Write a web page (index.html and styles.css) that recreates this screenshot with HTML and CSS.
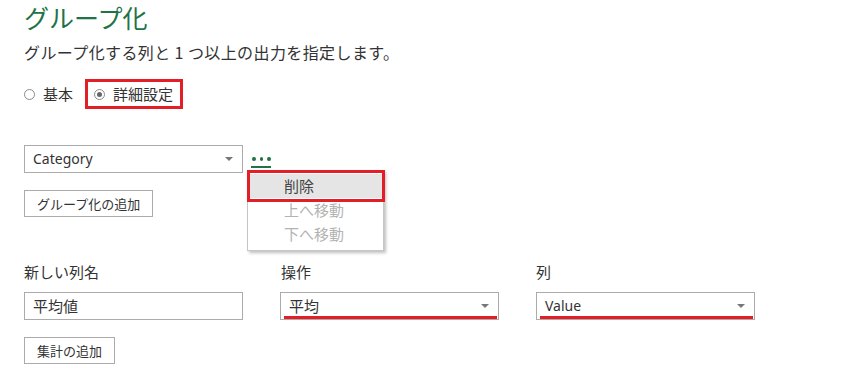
FILE: index.html
```html
<!DOCTYPE html>
<html>
<head>
<meta charset="utf-8"/>
<title>グループ化</title>
<link rel="stylesheet" href="styles.css">
</head>
<body>
<div class="page">
  <h1 class="title">グループ化</h1>
  <p class="lead">グループ化する列と 1 つ以上の出力を指定します。</p>

  <div class="modes">
    <label class="radio"><span class="dot"></span>基本</label>
    <label class="radio picked"><span class="dot on"></span>詳細設定</label>
  </div>

  <div class="group-row">
    <div class="select">Category<span class="caret"></span></div>
    <div class="more">
      <span class="dots"><i></i><i></i><i></i></span>
      <div class="menu">
        <div class="item active">削除</div>
        <div class="item off">上へ移動</div>
        <div class="item off">下へ移動</div>
      </div>
    </div>
  </div>

  <button class="btn">グループ化の追加</button>

  <div class="agg">
    <div class="field">
      <div class="label">新しい列名</div>
      <div class="select jp">平均値</div>
    </div>
    <div class="field">
      <div class="label">操作</div>
      <div class="select jp marked">平均<span class="caret"></span></div>
    </div>
    <div class="field">
      <div class="label">列</div>
      <div class="select marked">Value<span class="caret"></span></div>
    </div>
  </div>

  <button class="btn">集計の追加</button>
</div>
</body>
</html>
```

FILE: styles.css
```css
body {
   margin: 0;
   background-color: white;
   color: #333;
   font-family: "Noto Sans", "Noto Sans CJK JP", sans-serif;
   font-size: 14px;
}

.page {
   position: relative;
   padding-left: 24px;
}

.title {
   margin: 0;
   padding-top: 1px;
   font-family: "Noto Sans CJK JP", sans-serif;
   font-size: 25px;
   font-weight: normal;
   line-height: 32px;
   color: #217346;
}

.lead {
   margin: 9px 0 0;
   font-family: "Noto Sans CJK JP", sans-serif;
   font-size: 16px;
   letter-spacing: 0.4px;
   line-height: 20px;
   color: #333;
}

/* mode radios */
.modes {
   display: flex;
   align-items: center;
   gap: 12px;
   margin-top: 17px;
   height: 30px;
}

.radio {
   display: flex;
   align-items: center;
   gap: 8px;
   font-family: "Noto Sans CJK JP", sans-serif;
   font-size: 15px;
   line-height: 20px;
   color: #333;
}

.radio.picked {
   height: 24px;
   padding: 0 7px 0 6px;
   border: 3px solid #e41e26;
}

.dot {
   width: 9px;
   height: 9px;
   border: 1px solid #8a8a8a;
   border-radius: 50%;
   position: relative;
}

.dot.on::after {
   content: "";
   position: absolute;
   left: 2px;
   top: 2px;
   width: 5px;
   height: 5px;
   border-radius: 50%;
   background: #666;
}

/* dropdowns and inputs */
.group-row {
   display: flex;
   align-items: flex-start;
   gap: 8px;
   margin-top: 36px;
}

.select {
   position: relative;
   box-sizing: border-box;
   width: 219px;
   height: 28px;
   padding-left: 8px;
   border: 1px solid #ababab;
   font-family: "Noto Sans", "Noto Sans CJK JP", sans-serif;
   font-size: 14px;
   line-height: 26px;
   color: #333;
   background: white;
}

.select.jp {
   font-family: "Noto Sans CJK JP", sans-serif;
   font-size: 15px;
}

.caret {
   position: absolute;
   right: 9px;
   top: 11px;
   border-left: 4px solid transparent;
   border-right: 4px solid transparent;
   border-top: 4px solid #777;
}

.select.marked::after {
   content: "";
   position: absolute;
   left: 3px;
   right: 1px;
   bottom: 0;
   height: 3px;
   background: #e41e26;
}

.more {
   position: relative;
   width: 20px;
   height: 24px;
}

.dots {
   display: flex;
   gap: 4px;
   padding: 12px 0 0 1px;
   height: 9px;
   border-bottom: 2px solid #217346;
}

.dots i {
   width: 4px;
   height: 4px;
   border-radius: 50%;
   background: #217346;
}

.menu {
   position: absolute;
   left: -4px;
   top: 25px;
   box-sizing: border-box;
   width: 137px;
   padding: 3px 0 4px;
   border: 1px solid #c6c6c6;
   background: white;
   box-shadow: 2px 2px 3px rgba(0, 0, 0, 0.25);
   z-index: 2;
}

.item {
   position: relative;
   height: 24px;
   padding-left: 36px;
   font-family: "Noto Sans CJK JP", sans-serif;
   font-size: 15px;
   line-height: 24px;
   color: #444;
}

.item.active {
   background: #e5e5e5;
}

.item.active::after {
   content: "";
   position: absolute;
   left: -1px;
   right: -2px;
   top: -4px;
   bottom: -4px;
   border: 3px solid #e41e26;
}

.item.off {
   color: #b3b3b3;
}

/* buttons */
.btn {
   display: block;
   box-sizing: border-box;
   height: 27px;
   margin-top: 17px;
   padding: 0 12px;
   border: 1px solid #ababab;
   background: white;
   font-family: "Noto Sans CJK JP", sans-serif;
   font-size: 13px;
   line-height: 25px;
   color: #333;
}

/* aggregation row */
.agg {
   display: flex;
   gap: 37px;
   margin-top: 45px;
}

.field .label {
   font-family: "Noto Sans CJK JP", sans-serif;
   font-size: 15px;
   line-height: 20px;
   color: #333;
   margin-bottom: 10px;
}

.agg .field:nth-child(2) .label {
   padding-left: 1px;
}
```
